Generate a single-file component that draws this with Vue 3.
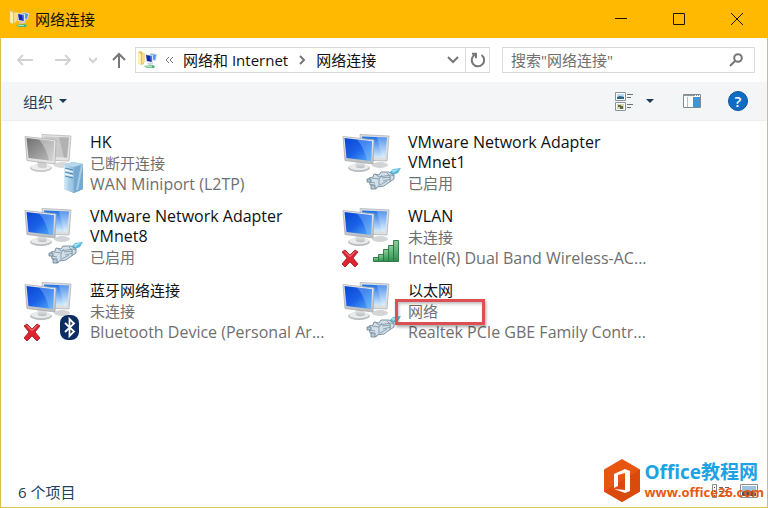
<template>
  <div class="window">
    <header class="title-bar">
      <svg class="app-icon" viewBox="0 0 20 20">
        <use href="#folder-net" />
      </svg>
      <h1 class="title">网络连接</h1>
      <div class="window-buttons">
        <button type="button" class="window-button" aria-label="最小化">
          <svg viewBox="0 0 12 12"><path d="M0 5.5h12" /></svg>
        </button>
        <button type="button" class="window-button" aria-label="最大化">
          <svg viewBox="0 0 12 12"><path d="M.5.5h11v11H.5z" /></svg>
        </button>
        <button type="button" class="window-button" aria-label="关闭">
          <svg viewBox="0 0 12 12"><path d="M0 0l12 12M12 0L0 12" /></svg>
        </button>
      </div>
    </header>

    <nav class="nav-bar">
      <button type="button" class="nav-button disabled" aria-label="后退">
        <svg width="16" height="16" viewBox="0 0 16 16"><path d="M6 3L1 8l5 5M1 8h15" /></svg>
      </button>
      <button type="button" class="nav-button disabled" aria-label="前进">
        <svg width="16" height="16" viewBox="0 0 16 16"><path d="M10 3l5 5-5 5M15 8H0" /></svg>
      </button>
      <button type="button" class="nav-button recent disabled" aria-label="最近的位置">
        <svg width="8" height="8" viewBox="0 0 8 8"><path d="M0 2l4 4 4-4" /></svg>
      </button>
      <button type="button" class="nav-button up" aria-label="上移">
        <svg width="14" height="16" viewBox="0 0 14 16"><path d="M7 16V2M1 8l6-6 6 6" /></svg>
      </button>

      <div class="address">
        <svg class="address-icon" viewBox="0 0 20 20">
          <use href="#folder-net" />
        </svg>
        <svg class="back-chevrons" width="8" height="8" viewBox="0 0 8 8"><path d="M4 1L1 4l3 3M8 1L5 4l3 3" /></svg>
        <a href="#" class="crumb">网络和 Internet</a>
        <svg class="crumb-arrow" width="6" height="10" viewBox="0 0 6 10"><path d="M1 1l4 4-4 4" /></svg>
        <a href="#" class="crumb">网络连接</a>
        <button type="button" class="address-button history" aria-label="历史记录">
          <svg width="12" height="8" viewBox="0 0 12 8"><path d="M1 1l5 5 5-5" /></svg>
        </button>
        <button type="button" class="address-button refresh" aria-label="刷新">
          <svg width="16" height="16" viewBox="0 0 16 16"><path d="M11.5 3A6.2 6.2 0 1 1 5 2.600M2 1.800h4v4.500" /></svg>
        </button>
      </div>

      <label class="search">
        <input type="text" class="search-input" placeholder="搜索&quot;网络连接&quot;" aria-label="搜索网络连接">
        <svg class="search-icon" width="14" height="14" viewBox="0 0 14 14">
          <circle cx="9" cy="5" r="3.8" />
          <path d="M6.200 7.800L1 13" />
        </svg>
      </label>
    </nav>

    <div class="toolbar">
      <button type="button" class="tool-button organize">
        组织
        <svg class="caret" width="8" height="4" viewBox="0 0 8 4"><path d="M0 0h8L4 4z" /></svg>
      </button>
      <button type="button" class="tool-button view" aria-label="更改视图">
        <svg width="19" height="19" viewBox="0 0 19 19">
          <path d="M.5.5h10v8H.5zM.5 10.500h10v8H.5z" fill="#fff" stroke="#8a9299" />
          <path d="M2 2h7v5H2z" fill="#b9daf0" />
          <path d="M2 7V5l3-1 4 1v2z" fill="#2f6585" />
          <path d="M2 12h7v5H2z" fill="#d6d6b4" />
          <path d="M3 13h3v1h2v3H5v-2H3z" fill="#62693d" />
          <path d="M12 2.500h6M12 5.500h4M12 12.500h6M12 15.500h4" stroke="#6a7178" />
        </svg>
      </button>
      <button type="button" class="tool-button view-more" aria-label="更多选项">
        <svg class="caret" width="8" height="4" viewBox="0 0 8 4"><path d="M0 0h8L4 4z" /></svg>
      </button>
      <button type="button" class="tool-button preview" aria-label="显示预览窗格">
        <svg width="18" height="14" viewBox="0 0 18 14">
          <path d="M.5.5h17v13H.5z" fill="#fff" stroke="#7f8a93" />
          <path d="M1 1.500h16" stroke="#8d979f" />
          <path d="M4.500 3v10" stroke="#b5bec5" />
          <path d="M10 3h7v10h-7z" fill="#3b97db" />
          <path d="M12 1.500h1M14 1.500h1M16 1.500h1" stroke="#fff" />
        </svg>
      </button>
      <button type="button" class="tool-button help" aria-label="帮助">?</button>
    </div>

    <main class="content">
      <ul class="connections">
        <li v-for="item in connections" :key="item.name" class="connection">
          <svg class="connection-icon" viewBox="0 0 60 62">
            <use :href="item.disabled ? '#computers-gray' : '#computers'" />
            <use v-if="item.offline" href="#cross" />
            <use :href="`#${item.type}`" />
          </svg>
          <div class="connection-text">
            <div class="name" :class="{ latin: isLatin(item.name) }">{{ item.name }}</div>
            <div class="detail">
              <span :class="{ marked: item.marked }">{{ item.status }}</span>
            </div>
            <div v-if="item.device" class="detail latin">{{ item.device }}</div>
          </div>
        </li>
      </ul>
    </main>

    <footer class="status-bar">
      <span>{{ connections.length }} 个项目</span>
      <div class="status-views">
        <button type="button" class="status-button" aria-label="详细信息">
          <svg width="18" height="14" viewBox="0 0 18 14">
            <path d="M.5.5h4v13h-4z" fill="#fff" stroke="#8a8a8a" />
            <path d="M2 3.500h1M2 7.500h1M2 11.500h1" stroke="#444" />
            <path d="M7 3.500h4M13 3.500h4M7 7.500h4M13 7.500h4M7 11.500h4M13 11.500h4" stroke="#666" />
          </svg>
        </button>
        <button type="button" class="status-button" aria-label="大图标">
          <svg width="18" height="14" viewBox="0 0 18 14">
            <path d="M.5.5h17v13H.5z" fill="#fff" stroke="#8a8a8a" />
            <path d="M2 2h14v10H2z" fill="#9cc3df" />
            <path d="M2 12V8l6-2 8 3v3z" fill="#3e5e70" />
          </svg>
        </button>
      </div>
    </footer>

    <div class="watermark">
      <svg class="watermark-logo" width="36" height="44" viewBox="0 0 36 44">
        <path d="M18 0l18 10.500v22L18 43 0 32.500v-22z" fill="#e8550f" />
        <path d="M0 32.500L36 10.500v22L18 43z" fill="#d94a0c" />
        <path d="M10 15l11-5 5 2v20l-5 2-11-4 11 1V14l-7 2v11l-4 2z" fill="#fff" />
      </svg>
      <div class="watermark-text">
        <div class="watermark-name">Office教程网</div>
        <div class="watermark-url">www.office26.com</div>
      </div>
    </div>

    <!-- shared icon shapes -->
    <svg class="defs" width="0" height="0" aria-hidden="true">
      <defs>
        <linearGradient id="screen" x1="0" y1="0" x2="1" y2="1">
          <stop offset="0" stop-color="#0b45cf" />
          <stop offset=".5" stop-color="#1a62e8" />
          <stop offset="1" stop-color="#58aef9" />
        </linearGradient>
        <linearGradient id="screen-back" x1="0" y1="0" x2="0" y2="1">
          <stop offset="0" stop-color="#1d6fe6" />
          <stop offset="1" stop-color="#d3ecff" />
        </linearGradient>
        <linearGradient id="screen-gray" x1="0" y1="0" x2="1" y2="1">
          <stop offset="0" stop-color="#707070" />
          <stop offset="1" stop-color="#bdbdbd" />
        </linearGradient>
        <linearGradient id="metal" x1="0" y1="0" x2="0" y2="1">
          <stop offset="0" stop-color="#f1f2f2" />
          <stop offset="1" stop-color="#b9bcbe" />
        </linearGradient>
        <linearGradient id="bars" x1="0" y1="0" x2="0" y2="1">
          <stop offset="0" stop-color="#8bd09b" />
          <stop offset="1" stop-color="#2f8f4c" />
        </linearGradient>
        <linearGradient id="tower" x1="0" y1="0" x2="1" y2="0">
          <stop offset="0" stop-color="#d5ebf8" />
          <stop offset="1" stop-color="#8ab9dc" />
        </linearGradient>

        <symbol id="folder-net" viewBox="0 0 20 20">
          <path d="M0 2l3-1 3 3v10l-3 1-3-2z" fill="#e3c063" />
          <path d="M0 2l3 2v11l-3-2z" fill="#fff0ae" />
          <path d="M4 4l3-1v9l-3 2z" fill="#f6dd8c" />
          <path d="M12 3l7 1-1 7-5-1z" fill="#c7d9ee" />
          <path d="M13 4l5 1-1 5-4-1z" fill="#5893e5" />
          <path d="M7 4l8 1v8l-7-1z" fill="#dce7f4" />
          <path d="M8 5l6 1v6l-5-1z" fill="#1728a8" />
          <path d="M12 5.700l2 .3v6l-1-.2z" fill="#4878e4" />
          <path d="M9 13l5 0 2 1-5 1z" fill="#c6d0d8" />
          <path d="M6 16l8-1 3 1-1 2-7 0z" fill="#4fb276" />
          <path d="M8 16.500h6" stroke="#a8e5bb" />
        </symbol>

        <symbol id="computers" viewBox="0 0 60 62">
          <ellipse cx="38" cy="33" rx="8" ry="3" fill="#d2d4d6" />
          <path d="M18 2.500l29 1.500-2 25-25-1z" fill="#dcdfe1" stroke="#aeb4b9" stroke-width=".8" />
          <path d="M20 4.500l25 1-2 20-21-1z" fill="url(#screen-back)" />
          <path d="M35 5.200l10 .4-2 20-3-.2z" fill="#fff" opacity=".25" />
          <ellipse cx="17" cy="36" rx="11" ry="4" fill="#b8bcbf" />
          <ellipse cx="17" cy="35" rx="10" ry="3.300" fill="#e8eaeb" />
          <path d="M13 29l9 1 1 5c-3 2-8 1-9 0z" fill="url(#metal)" />
          <path d="M1 4.500L32 8l-1 24L3 28.500z" fill="url(#metal)" stroke="#a7acb0" stroke-width=".8" />
          <path d="M2.500 6L30 9.300l-1 19.700L4.500 26z" fill="url(#screen)" />
          <path d="M15 7.500l15 1.800-1 19.700-4-.5C23 20 20 13 15 7.500z" fill="#9dd0ff" opacity=".35" />
        </symbol>

        <symbol id="computers-gray" viewBox="0 0 60 62">
          <ellipse cx="38" cy="33" rx="8" ry="3" fill="#d9d9d9" />
          <path d="M18 2.500l29 1.500-2 25-25-1z" fill="#e3e3e3" stroke="#b8b8b8" stroke-width=".8" />
          <path d="M20 4.500l25 1-2 20-21-1z" fill="#c9c9c9" />
          <path d="M35 5.200l10 .4-2 20-3-.2z" fill="#9a9a9a" opacity=".5" />
          <ellipse cx="17" cy="36" rx="11" ry="4" fill="#c6c6c6" />
          <ellipse cx="17" cy="35" rx="10" ry="3.300" fill="#ededed" />
          <path d="M13 29l9 1 1 5c-3 2-8 1-9 0z" fill="#cfcfcf" />
          <path d="M1 4.500L32 8l-1 24L3 28.500z" fill="#e4e4e4" stroke="#b0b0b0" stroke-width=".8" />
          <path d="M2.500 6L30 9.300l-1 19.700L4.500 26z" fill="url(#screen-gray)" />
          <path d="M15 7.500l15 1.800-1 19.700-4-.5C23 20 20 13 15 7.500z" fill="#fff" opacity=".35" />
        </symbol>

        <symbol id="cable" viewBox="0 0 60 62">
          <path d="M46 42l5-5 8-1-3 5-7 3z" fill="#58b9da" />
          <path d="M50 38l7-1-6 4z" fill="#a5e4f2" />
          <path d="M27 46l4-1 1-3 5 1 2-3 8 0 5 3 0 4-6 4-4 3-7 1-1 2-3-1v-3l-3 0z" fill="#d3e0e9" stroke="#71899b" stroke-width=".9" />
          <path d="M30 46l7 1 3-4M33 42l4 3 12-2 3 1M37 47v7M40 46l9-1M41 49l8-2M38 53l7-4M28 50l5 1M45 41l3 3v6" fill="none" stroke="#8298a9" stroke-width=".9" />
          <path d="M25 47h4v3h-4zM29 53h4v4h-4z" fill="#b9cad6" stroke="#71899b" stroke-width=".9" />
        </symbol>

        <symbol id="server" viewBox="0 0 60 62">
          <path d="M40 33l9-3 10 2v25l-9 4-10-4z" fill="#83b2d3" />
          <path d="M40 33l10 2v26l-10-4z" fill="url(#tower)" />
          <path d="M50 35l9-3v25l-9 4z" fill="#75a9cf" />
          <path d="M40 33l9-3 10 2-9 3z" fill="#b7d9ed" />
          <path d="M41 36l8 2M41 40l8 2M41 44l8 2" stroke="#4f83ac" />
          <path d="M41 38l8 2M41 42l8 2" stroke="#fff" />
          <path d="M53 58l5-25" stroke="#b8dbef" stroke-width="2" opacity=".7" />
          <path d="M45 49v9M48 50v9" stroke="#a0c8e2" />
        </symbol>

        <symbol id="signal" viewBox="0 0 60 62">
          <g fill="url(#bars)" stroke="#267440" stroke-width=".9">
            <path d="M31.500 51.500h5v4h-5z" />
            <path d="M36.500 48.500h5v7h-5z" />
            <path d="M41.500 43.500h5v12h-5z" />
            <path d="M46.500 39.500h5v16h-5z" />
            <path d="M51.500 34.500h5v21h-5z" />
          </g>
        </symbol>

        <symbol id="bluetooth" viewBox="0 0 60 62">
          <rect x="36" y="35" width="19" height="25" rx="8" fill="#0b2d64" />
          <path d="M41 43l9 8.500-4.500 4.500V39l4.500 4.500L41 52" fill="none" stroke="#fff" stroke-width="1.800" />
        </symbol>

        <symbol id="cross" viewBox="0 0 60 62">
          <path d="M3 44l5 5 5-5 3 2-5 6 5 6-3 3-5-5-5 5-3-3 5-6-5-6z" fill="#dc2530" stroke="#9e1720" stroke-width=".8" />
          <path d="M3 45.500l5 5 5-5" fill="none" stroke="#f59297" />
        </symbol>
      </defs>
    </svg>
  </div>
</template>

<script setup>
const connections = [
  { name: 'HK', status: '已断开连接', device: 'WAN Miniport (L2TP)', type: 'server', disabled: true },
  { name: 'VMware Network Adapter VMnet1', status: '已启用', type: 'cable' },
  { name: 'VMware Network Adapter VMnet8', status: '已启用', type: 'cable' },
  { name: 'WLAN', status: '未连接', device: 'Intel(R) Dual Band Wireless-AC...', type: 'signal', offline: true },
  { name: '蓝牙网络连接', status: '未连接', device: 'Bluetooth Device (Personal Ar...', type: 'bluetooth', offline: true },
  { name: '以太网', status: '网络', device: 'Realtek PCIe GBE Family Contr...', type: 'cable', marked: true }
]

// Latin text is set one size larger so it balances the Chinese
const isLatin = (text) => /^[\w\s().-]+$/.test(text)
</script>

<style>
body {
  background: #fff;
}
</style>

<style scoped>
* {
  box-sizing: border-box;
}

.window {
  position: relative;
  display: flex;
  flex-direction: column;
  min-height: 100vh;
  border: 1px solid #dcc04a;
  border-top: 0;
  background: #fff;
  color: #111;
  font-family: "Open Sans", "Noto Sans CJK SC", sans-serif;
  font-size: 15px;
}

button {
  padding: 0;
  border: 0;
  background: none;
  color: inherit;
  font: inherit;
}

svg {
  display: block;
  flex-shrink: 0;
}

.title-bar {
  display: flex;
  align-items: center;
  height: 38px;
  margin: 0 -1px;
  padding-left: 10px;
  background: #ffb900;
}

.app-icon {
  width: 20px;
  height: 20px;
}

.title {
  margin: 0 0 0 5px;
  font-size: 15px;
  font-weight: 400;
  line-height: 20px;
}

.window-buttons {
  display: flex;
  margin-left: auto;
  padding-right: 2px;
}

.window-button {
  display: flex;
  align-items: center;
  justify-content: center;
  width: 58px;
  height: 38px;
}

.window-button svg {
  width: 12px;
  height: 12px;
  fill: none;
  stroke: #1c1400;
}

.nav-bar {
  display: flex;
  align-items: center;
  height: 44px;
  padding: 0 12px 0 16px;
}

.nav-button {
  margin-right: 22px;
}

.nav-button svg,
.address svg,
.search-icon {
  fill: none;
  stroke: #777;
  stroke-width: 2;
}

.nav-button.disabled svg {
  stroke: #d2d2d2;
}

.nav-button.recent {
  margin: 0 15px 0 -4px;
}

.nav-button.up {
  margin-right: 9px;
}

.address {
  display: flex;
  align-items: center;
  flex: 355 1 355px;
  height: 26px;
  border: 1px solid #d9d9d9;
  white-space: nowrap;
}

.address-icon {
  width: 20px;
  height: 20px;
  margin-left: 2px;
}

.address .address-icon {
  stroke: none;
}

.address .back-chevrons {
  margin: 0 10px 0 7px;
  stroke-width: 1;
}

.crumb {
  color: #111;
  line-height: 20px;
  text-decoration: none;
}

.address .crumb-arrow {
  margin: 0 11px;
  stroke-width: 2;
}

.address-button {
  display: flex;
  align-items: center;
  justify-content: center;
  width: 24px;
  height: 24px;
}

.address-button.history {
  margin-left: auto;
}

.address-button.refresh {
  border-left: 1px solid #d9d9d9;
}

.search {
  display: flex;
  align-items: center;
  flex: 253 1 253px;
  height: 26px;
  margin-left: 12px;
  padding: 0 11px 0 8px;
  border: 1px solid #d9d9d9;
}

.search-input {
  flex: 1;
  min-width: 0;
  padding: 0;
  border: 0;
  outline: 0;
  background: none;
  font: inherit;
  line-height: 20px;
}

.search-input::placeholder {
  color: #707070;
  opacity: 1;
}

.toolbar {
  display: flex;
  align-items: center;
  height: 39px;
  padding: 0 19px 0 22px;
  border-bottom: 1px solid #eceef0;
  background: #f4f5f7;
  color: #24405c;
}

.organize {
  display: flex;
  align-items: center;
  gap: 6px;
  margin-right: auto;
}

.caret {
  fill: #1e3954;
}

.view-more {
  margin: 0 29px 0 12px;
}

.preview {
  margin-right: 27px;
}

.help {
  width: 20px;
  height: 20px;
  border: 1px solid #0b559e;
  border-radius: 50%;
  background: #0f6cc5;
  color: #fff;
  font-weight: 600;
  line-height: 18px;
  text-align: center;
}

.content {
  flex: 1;
  padding: 11px 0 0 23px;
}

.connections {
  display: grid;
  grid-template-columns: repeat(auto-fill, 318px);
  grid-auto-rows: 74px;
  margin: 0;
  padding: 0;
  list-style: none;
}

.connection {
  display: flex;
  align-items: flex-start;
}

.connection-icon {
  width: 60px;
  height: 62px;
  margin-right: 6px;
}

.connection-text {
  width: 240px;
}

.name {
  width: 200px;
  padding-bottom: 1px;
  line-height: 20px;
}

.detail {
  color: #6f6f6f;
  line-height: 21px;
  white-space: nowrap;
}

.latin {
  font-size: 16px;
}

.marked {
  position: relative;
}

.marked::after {
  content: "";
  position: absolute;
  top: -2px;
  left: -13px;
  box-sizing: border-box;
  width: 90px;
  height: 26px;
  border: 3px solid #dc4f52;
  box-shadow: 1px 2px 3px rgba(0, 0, 0, 0.35), inset 1px 2px 3px rgba(0, 0, 0, 0.25);
}

.status-bar {
  display: flex;
  align-items: center;
  justify-content: space-between;
  height: 30px;
  padding: 0 9px 2px 17px;
  color: #24405c;
}

.status-views {
  display: flex;
  gap: 10px;
}

.watermark {
  position: absolute;
  right: 3px;
  bottom: 4px;
  display: flex;
  align-items: center;
  gap: 4px;
  font-weight: 700;
  white-space: nowrap;
}

.watermark-name {
  color: #1ba3e4;
  font-size: 19px;
  line-height: 22px;
}

.watermark-url {
  color: #e8590f;
  font-size: 13px;
  line-height: 18px;
}

.defs {
  position: absolute;
}
</style>
